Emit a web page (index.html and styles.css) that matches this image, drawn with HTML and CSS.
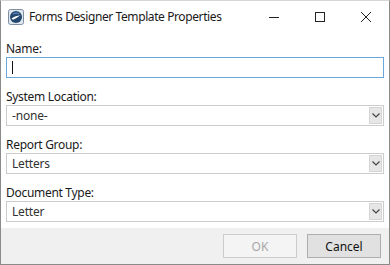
FILE: index.html
```html
<!DOCTYPE html>
<html lang="en">
<head>
<meta charset="UTF-8">
<meta name="viewport" content="width=device-width, initial-scale=1.0">
<title>Forms Designer Template Properties</title>
<link rel="stylesheet" href="styles.css">
</head>
<body>
<div class="window">
  <div class="titlebar">
    <svg class="app-icon" width="16" height="16" viewBox="0 0 16 16">
      <rect x="0.5" y="0.5" width="15" height="15" rx="2" fill="#dfe6ee" stroke="#7d8ea3"/>
      <circle cx="8" cy="8" r="6" fill="#24476f"/>
      <path d="M3.5 9.5 C6 7.5 9 6.8 12.6 6.2 C10.5 7.6 8 9.3 5 10.8 Z" fill="#ffffff"/>
      <path d="M5 5 C7 3.8 9.5 3.8 11 5" stroke="#6fa3d8" stroke-width="1" fill="none"/>
    </svg>
    <span class="title">Forms Designer Template Properties</span>
    <div class="controls">
      <span class="ctl">
        <svg width="10" height="10" viewBox="0 0 10 10"><path d="M0 5.5 H10" stroke="#222" stroke-width="1"/></svg>
      </span>
      <span class="ctl">
        <svg width="10" height="10" viewBox="0 0 10 10"><rect x="0.5" y="0.5" width="9" height="9" fill="none" stroke="#222"/></svg>
      </span>
      <span class="ctl">
        <svg width="10" height="10" viewBox="0 0 10 10"><path d="M0 0 L10 10 M10 0 L0 10" stroke="#222" stroke-width="1"/></svg>
      </span>
    </div>
  </div>

  <div class="content">
    <div class="field">
      <label class="label">Name:</label>
      <div class="textbox"><span class="caret"></span></div>
    </div>
    <div class="field">
      <label class="label">System Location:</label>
      <div class="combo"><span class="value">-none-</span><span class="drop"><svg width="8" height="5" viewBox="0 0 8 5"><path d="M0.5 0.5 L4 4 L7.5 0.5" stroke="#444" stroke-width="1.2" fill="none"/></svg></span></div>
    </div>
    <div class="field">
      <label class="label">Report Group:</label>
      <div class="combo"><span class="value">Letters</span><span class="drop"><svg width="8" height="5" viewBox="0 0 8 5"><path d="M0.5 0.5 L4 4 L7.5 0.5" stroke="#444" stroke-width="1.2" fill="none"/></svg></span></div>
    </div>
    <div class="field">
      <label class="label">Document Type:</label>
      <div class="combo"><span class="value">Letter</span><span class="drop"><svg width="8" height="5" viewBox="0 0 8 5"><path d="M0.5 0.5 L4 4 L7.5 0.5" stroke="#444" stroke-width="1.2" fill="none"/></svg></span></div>
    </div>
  </div>

  <div class="footer">
    <button class="btn btn-disabled">OK</button>
    <button class="btn">Cancel</button>
  </div>
</div>
</body>
</html>
```

FILE: styles.css
```css
  body {
    margin: 0;
    padding: 0;
    font-family: "Noto Sans", "Open Sans", sans-serif;
    font-size: 12px;
    color: #1a1a1a;
    background: #fff;
  }
  .window {
    width: 390px;
    height: 265px;
    box-sizing: border-box;
    border: 1px solid #8a8a8a;
    border-top-color: #d6d6d6;
    display: flex;
    flex-direction: column;
    background: #fff;
  }
  .titlebar {
    height: 31px;
    display: flex;
    align-items: center;
    padding-left: 7px;
  }
  .app-icon {
    flex: none;
  }
  .title {
    margin-left: 5px;
    font-size: 12px;
    letter-spacing: -0.4px;
    color: #1a1a1a;
  }
  .controls {
    margin-left: auto;
    display: flex;
    height: 100%;
  }
  .ctl {
    width: 46px;
    display: flex;
    align-items: center;
    justify-content: center;
  }
  .content {
    flex: 1;
    padding: 9px 5px 0 5px;
    display: flex;
    flex-direction: column;
    gap: 11px;
  }
  .field {
    display: flex;
    flex-direction: column;
  }
  .label {
    height: 16px;
    line-height: 15px;
    letter-spacing: -0.3px;
    color: #1a1a1a;
  }
  .textbox {
    height: 21px;
    box-sizing: border-box;
    border: 1px solid #6aa6dc;
    display: flex;
    align-items: center;
    padding-left: 5px;
  }
  .caret {
    width: 1px;
    height: 13px;
    background: #111;
  }
  .combo {
    height: 21px;
    box-sizing: border-box;
    border: 1px solid #cccccc;
    display: flex;
    align-items: center;
    padding: 1px;
  }
  .value {
    flex: 1;
    padding-left: 4px;
    color: #333;
    letter-spacing: -0.2px;
  }
  .drop {
    width: 13px;
    height: 17px;
    background: #e6e6e6;
    border: 1px solid #d4d4d4;
    box-sizing: border-box;
    display: flex;
    align-items: center;
    justify-content: center;
  }
  .footer {
    height: 36px;
    background: #f0f0f0;
    display: flex;
    justify-content: flex-end;
    align-items: center;
    gap: 10px;
    padding-right: 8px;
  }
  .btn {
    width: 74px;
    height: 24px;
    font-family: "Noto Sans", "Open Sans", sans-serif;
    font-size: 12px;
    background: #e1e1e1;
    border: 1px solid #adadad;
    color: #111;
    padding: 0;
  }
  .btn-disabled {
    background: #f4f4f4;
    border-color: #cccccc;
    color: #a8a8a8;
  }
```
